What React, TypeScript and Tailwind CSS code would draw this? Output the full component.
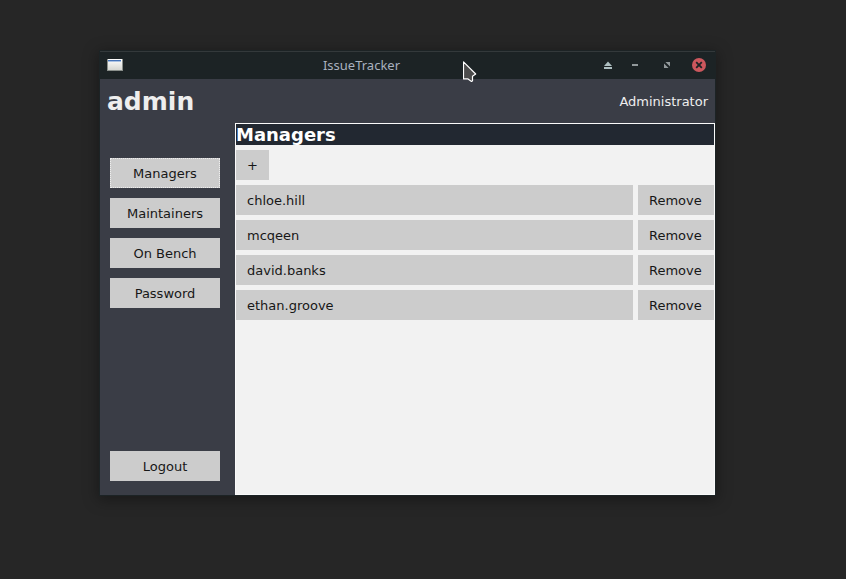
import type { ReactNode } from "react";

const sections = ["Managers", "Maintainers", "On Bench", "Password"];
const managers = ["chloe.hill", "mcqeen", "david.banks", "ethan.groove"];

function WindowButton({ label, children }: { label: string; children: ReactNode }) {
  return (
    <button type="button" aria-label={label} className="flex size-4 items-center justify-center">
      {children}
    </button>
  );
}

function TitleBar() {
  return (
    <div className="flex h-7 items-center border-t border-[#33393b] bg-[#1c2325] pr-2 pb-[2px] pl-[7px]">
      <svg width="16" height="12" viewBox="0 0 16 12" aria-hidden="true" shapeRendering="crispEdges">
        <defs>
          <linearGradient id="pane" x1="0" y1="0" x2="0" y2="1">
            <stop offset="0" stopColor="#ffffff" />
            <stop offset="1" stopColor="#d5d6d2" />
          </linearGradient>
        </defs>
        <rect width="16" height="12" fill="#8a8f8b" />
        <rect x="1" y="0" width="14" height="11" fill="url(#pane)" />
        <rect x="1" y="1" width="13" height="1" fill="#4573b8" />
        <rect x="1" y="2" width="13" height="1" fill="#a9c0e2" />
      </svg>
      <h1 className="flex-1 text-center font-['Noto_Sans',sans-serif] text-[13px] leading-5 text-[#a9b1bf]">
        IssueTracker
      </h1>
      <div className="flex items-center">
        <div className="flex gap-[11px]">
          <WindowButton label="Shade">
            <svg width="8" height="8" viewBox="0 0 8 8" fill="#aebfc1">
              <path d="M4 0.5 8 5H0Z" />
              <path d="M0 6h8v2H0Z" />
            </svg>
          </WindowButton>
          <WindowButton label="Minimize">
            <svg width="6" height="2" viewBox="0 0 6 2" fill="#92999b">
              <path d="M0 0h6v2H0Z" />
            </svg>
          </WindowButton>
        </div>
        <div className="ml-4 flex gap-4">
          <WindowButton label="Maximize">
            <svg width="6" height="6" viewBox="0 0 6 6" fill="#92999b">
              <path d="M1.4 0H6v4.6ZM0 1.4 4.6 6H0Z" />
            </svg>
          </WindowButton>
          <WindowButton label="Close">
            <svg width="14" height="14" viewBox="0 0 14 14">
              <circle cx="7" cy="7" r="7" fill="#cc575d" />
              <path d="m4.2 4.2 5.6 5.6m0-5.6-5.6 5.6" stroke="#1c2325" strokeWidth="1.8" />
            </svg>
          </WindowButton>
        </div>
      </div>
    </div>
  );
}

function Pointer() {
  return (
    <svg
      className="pointer-events-none absolute top-[10px] left-[363px]"
      width="14"
      height="22"
      viewBox="0 0 14 22"
      aria-hidden="true"
    >
      <path
        d="M.5 .8v17h4.2l3.8 2.7 1-.8v-4.4l3.2-2.3Z"
        fill="#4c4c4c"
        stroke="#ffffff"
        strokeWidth="1.2"
        strokeLinejoin="round"
      />
    </svg>
  );
}

export default function App() {
  return (
    <main className="flex min-h-screen bg-[#262626] pt-[51px] pr-[131px] pb-[84px] pl-[100px] font-['DejaVu_Sans',sans-serif] text-[13px] leading-4 text-[#171717]">
      <div className="relative flex min-w-0 flex-1 flex-col shadow-[0_0_0_1px_#1c2325,0_3px_14px_2px_rgba(0,0,0,0.35)]">
        <TitleBar />
        <header className="flex h-11 items-center justify-between bg-[#3a3d46] px-[7px] pt-[2px] text-[#eeeeee]">
          <h2 className="text-[25px] leading-8 font-bold">admin</h2>
          <span>Administrator</span>
        </header>
        <div className="flex flex-1">
          <nav className="flex w-[135px] shrink-0 flex-col gap-[10px] bg-[#3a3d46] pt-[35px] pr-[15px] pb-[14px] pl-[10px]">
            {sections.map((name) => (
              <button
                key={name}
                type="button"
                className={
                  name === "Managers"
                    ? "h-[30px] bg-[#cccccc] pt-[2px] outline-1 -outline-offset-1 outline-[#eeeeee] outline-dotted"
                    : "h-[30px] bg-[#cccccc] pt-[2px]"
                }
              >
                {name}
              </button>
            ))}
            <button type="button" className="mt-auto h-[30px] bg-[#cccccc] pt-[2px]">
              Logout
            </button>
          </nav>
          <section className="flex min-w-0 flex-1 flex-col gap-[5px] border border-[#fafafa] bg-[#f2f2f2]">
            <h3 className="bg-[#222831] text-[18px] leading-[21px] font-bold text-white">Managers</h3>
            <button type="button" aria-label="Add manager" className="h-[30px] w-[33px] bg-[#cccccc] pt-[2px]">
              +
            </button>
            <ul className="flex flex-col gap-[5px]">
              {managers.map((name) => (
                <li key={name} className="flex gap-[5px]">
                  <button type="button" className="h-[30px] flex-1 bg-[#cccccc] px-[11px] pt-[2px] text-left">
                    {name}
                  </button>
                  <button type="button" className="h-[30px] w-[76px] bg-[#cccccc] px-[11px] pt-[2px] text-left">
                    Remove
                  </button>
                </li>
              ))}
            </ul>
          </section>
        </div>
        <Pointer />
      </div>
    </main>
  );
}
